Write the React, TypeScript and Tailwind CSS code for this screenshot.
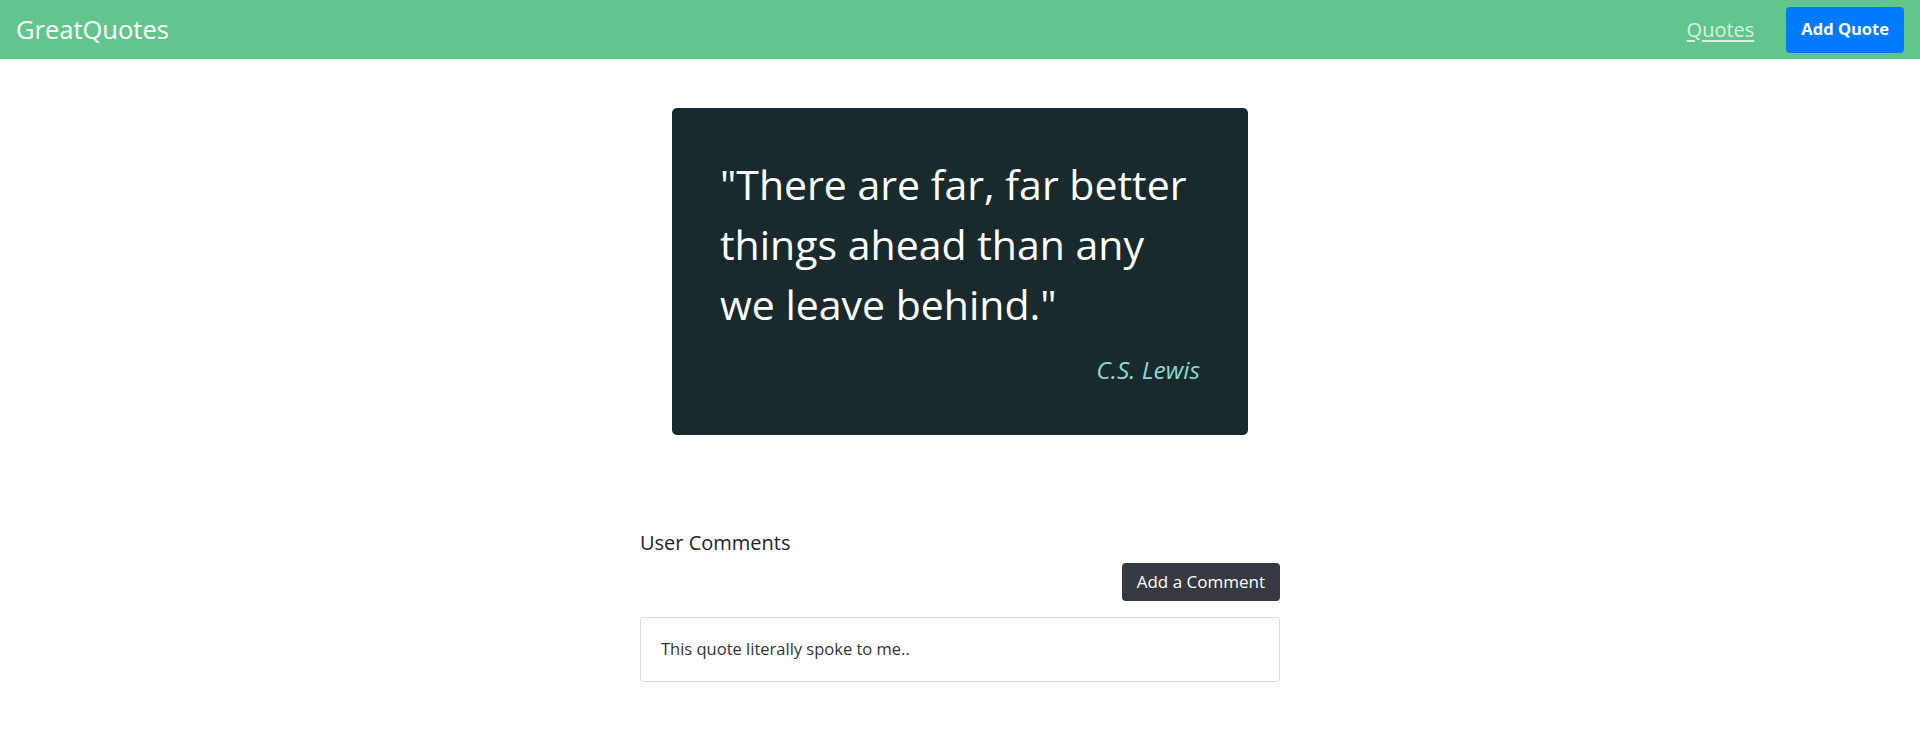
import React from 'react'

const font = { fontFamily: '"Open Sans", "Noto Sans", sans-serif' }

const Header = () => {
    return (
        <header className="h-[59px] bg-[#62c68c] flex items-center justify-between pl-4 pr-4">
            <span className="text-white text-[25.5px] font-normal">GreatQuotes</span>
            <nav className="flex items-center gap-8">
                <a href="#" className="text-[#d8f3e2] text-[20px] font-normal underline underline-offset-[3px]">Quotes</a>
                <button className="h-[46px] px-[15px] rounded bg-[#007bff] text-white text-[16.5px] font-bold">Add Quote</button>
            </nav>
        </header>
    )
}

const QuoteCard = () => {
    return (
        <figure className="w-[576px] mx-auto mt-[49px] rounded-[5px] bg-[#192a2d] px-12 pt-[46px] pb-[49px]">
            <p className="text-white text-[41px] font-normal leading-[60px]">
                "There are far, far better things ahead than any we leave behind."
            </p>
            <p className="mt-[19px] text-right text-[#8fd6d3] text-[24.5px] italic font-normal leading-[33px]">C.S. Lewis</p>
        </figure>
    )
}

const Comments = () => {
    return (
        <section className="w-[640px] mx-auto mt-[93px]">
            <h2 className="text-[20px] leading-[30px] text-[#212529]">User Comments</h2>
            <div className="flex justify-end mt-[5px]">
                <button className="h-[38px] px-[15px] rounded bg-[#343a40] text-white text-[17px]">Add a Comment</button>
            </div>
            <ul className="mt-4">
                <li className="border border-[#dcdcdc] rounded-[3px] px-[20px] pt-[19px] pb-[20px] text-[16.5px] leading-[24px] text-[#333]">
                    This quote literally spoke to me..
                </li>
            </ul>
        </section>
    )
}

export default function App() {
    return (
        <div className="min-h-[743px] bg-white" style={font}>
            <Header />
            <QuoteCard />
            <Comments />
        </div>
    )
}
